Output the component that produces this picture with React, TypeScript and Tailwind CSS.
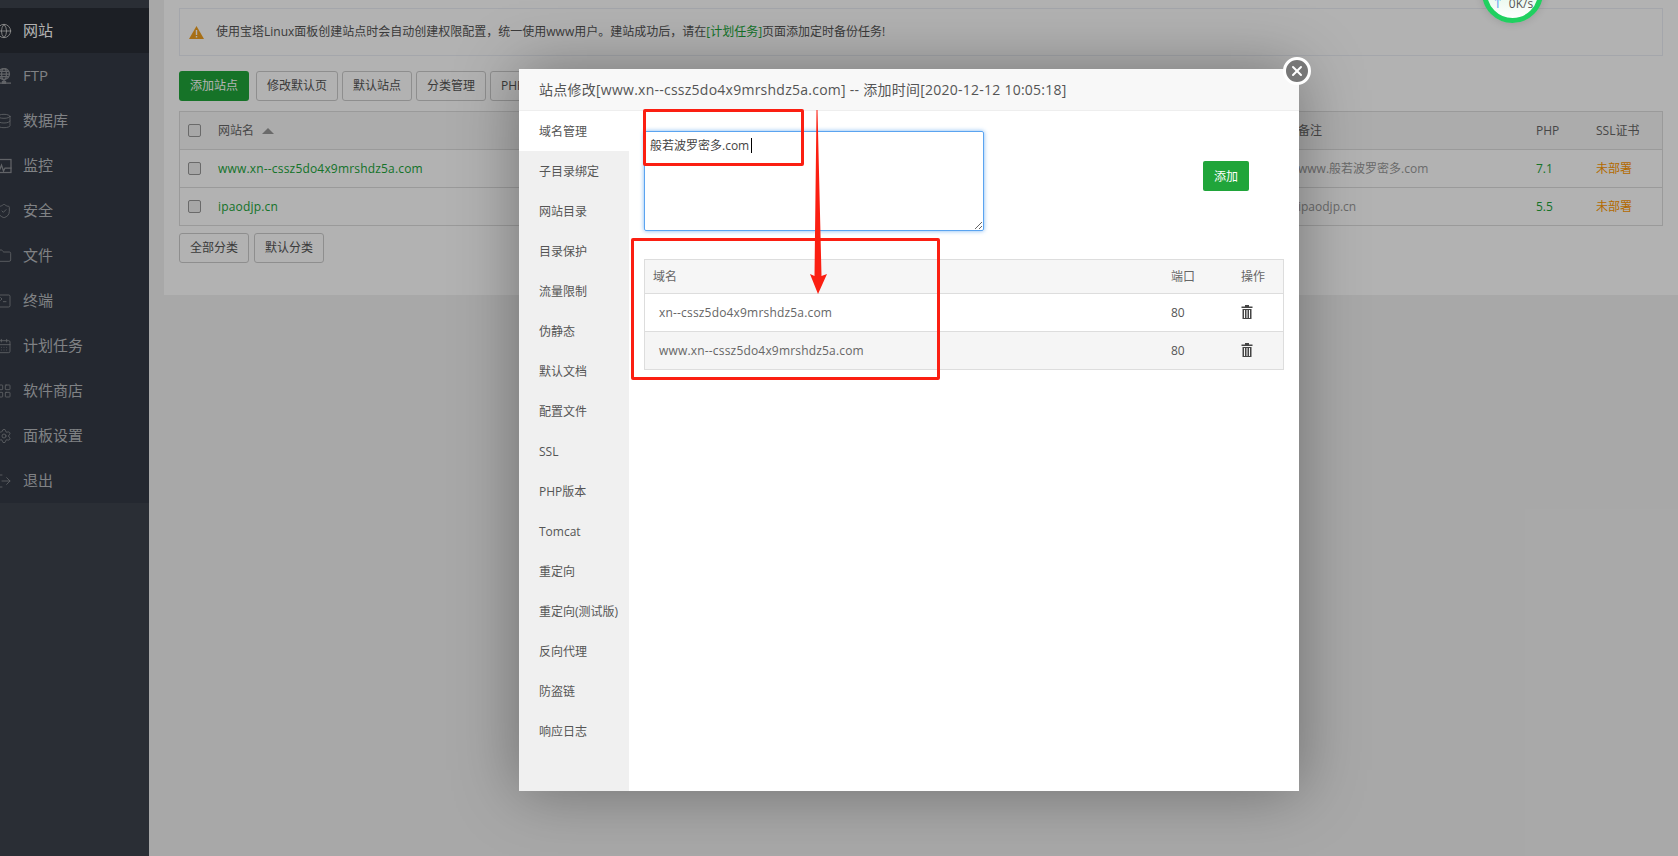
import { CalendarDays, Database, Folder, Globe, LayoutGrid, LogOut, Settings, ShieldCheck, SquareTerminal, X } from "lucide-react";
import type { SVGProps } from "react";

const font = "font-['Open_Sans','Noto_Sans_CJK_SC',sans-serif]";

function FtpIcon(props: SVGProps<SVGSVGElement>) {
  return (
    <svg viewBox="0 0 16 16" fill="none" stroke="currentColor" strokeWidth="1" {...props}>
      <circle cx="8" cy="6" r="5.5" />
      <ellipse cx="8" cy="6" rx="2.4" ry="5.5" />
      <path d="M2.5 6h11M3.3 3.3h9.4M3.3 8.7h9.4M8 11.5v2.5M1 15h14" />
      <rect x="6.5" y="13.5" width="3" height="2" fill="currentColor" />
    </svg>
  );
}

function MonitorIcon(props: SVGProps<SVGSVGElement>) {
  return (
    <svg viewBox="0 0 16 16" fill="none" stroke="currentColor" strokeWidth="1" {...props}>
      <rect x="1" y="1.5" width="14" height="13" />
      <path d="M1 11h3l1.5-4 2 6 1.5-3h6.5" />
    </svg>
  );
}

const navItems = [
  { label: "网站", icon: Globe },
  { label: "FTP", icon: FtpIcon },
  { label: "数据库", icon: Database },
  { label: "监控", icon: MonitorIcon },
  { label: "安全", icon: ShieldCheck },
  { label: "文件", icon: Folder },
  { label: "终端", icon: SquareTerminal },
  { label: "计划任务", icon: CalendarDays },
  { label: "软件商店", icon: LayoutGrid },
  { label: "面板设置", icon: Settings },
  { label: "退出", icon: LogOut },
];

const toolButtons = ["修改默认页", "默认站点", "分类管理"];

const sites = [
  { name: "www.xn--cssz5do4x9mrshdz5a.com", note: "www.般若波罗密多.com", php: "7.1" },
  { name: "ipaodjp.cn", note: "ipaodjp.cn", php: "5.5" },
];

const modalTabs = ["域名管理", "子目录绑定", "网站目录", "目录保护", "流量限制", "伪静态", "默认文档", "配置文件", "SSL", "PHP版本", "Tomcat", "重定向", "重定向(测试版)", "反向代理", "防盗链", "响应日志"];

const domains = ["xn--cssz5do4x9mrshdz5a.com", "www.xn--cssz5do4x9mrshdz5a.com"];

function Checkbox() {
  return <span className="h-[13px] w-[13px] rounded-[2px] border border-[#999] bg-[#f0f0f0]" />;
}

function TrashIcon() {
  return (
    <svg width="12" height="14" viewBox="0 0 12 14" fill="#444">
      <path d="M4 0h4v1.5h3.5V3H.5V1.5H4z" />
      <path d="M1.5 4h9v10h-9zM3 5v8h1V5zm2.5 0v8h1V5zM8 5v8h1V5z" fillRule="evenodd" />
    </svg>
  );
}

function Sidebar() {
  return (
    <aside className="h-full w-[149px] shrink-0 bg-[#3d434d] pt-2">
      <ul className="bg-[#343a45]">
        {navItems.map((item, i) => (
          <li key={item.label} className={`flex h-[45px] items-center gap-[11px] text-[15px] ${i === 0 ? "bg-[#292d35] text-white" : "text-[#b8bbbf]"}`}>
            <item.icon className={`-ml-1 h-4 w-4 shrink-0 ${i === 0 ? "text-[#d0d0d0]" : "text-[#8c8f94]"}`} strokeWidth={1.25} />
            {item.label}
          </li>
        ))}
      </ul>
    </aside>
  );
}

function SiteTable() {
  return (
    <div className="mt-[10px] border border-[#ddd] text-[12px] text-[#666]">
      <div className="grid h-[37px] grid-cols-[38px_1080px_238px_60px_1fr] items-center bg-[#f6f6f6]">
        <span className="flex pl-[8px]"><Checkbox /></span>
        <span className="flex items-center gap-2">网站名<span className="h-0 w-0 border-x-[6px] border-b-[6px] border-x-transparent border-b-[#999]" /></span>
        <span>备注</span>
        <span>PHP</span>
        <span>SSL证书</span>
      </div>
      {sites.map((site) => (
        <div key={site.name} className="grid h-[38px] grid-cols-[38px_1080px_238px_60px_1fr] items-center border-t border-[#ddd]">
          <span className="flex pl-[8px]"><Checkbox /></span>
          <span className="tracking-[0.18px] text-[#20a53a]">{site.name}</span>
          <span className="text-[#999]">{site.note}</span>
          <span className="text-[#20a53a]">{site.php}</span>
          <span className="text-[#ff9900]">未部署</span>
        </div>
      ))}
    </div>
  );
}

function SiteModal() {
  return (
    <div className="absolute left-[519px] top-[69px] h-[722px] w-[780px] bg-white text-[12px] text-[#555] shadow-[0_0_60px_rgba(0,0,0,0.35)]">
      <div className="flex h-[42px] items-center border-b border-[#eee] bg-[#f8f8f8] pl-[20px] text-[14px] tracking-[0.25px] text-[#555]">
        站点修改[www.xn--cssz5do4x9mrshdz5a.com] -- 添加时间[2020-12-12 10:05:18]
      </div>
      <div className="flex h-[680px]">
        <div className="w-[110px] shrink-0 bg-[#f0f0f0]">
          {modalTabs.map((tab, i) => (
            <div key={tab} className={`flex h-10 items-center whitespace-nowrap pl-[20px] pt-[1px] ${i === 0 ? "bg-white" : ""}`}>{tab}</div>
          ))}
        </div>
        <div className="flex-1 pl-[15px] pt-[20px]">
          <div className="flex">
            <div className="relative h-[100px] w-[340px]">
              <textarea
                readOnly
                defaultValue="般若波罗密多.com"
                className="block h-full w-full rounded-[2px] border border-[#5ba4f0] px-[5px] py-[4px] text-[12px] leading-[20px] text-[#444] shadow-[0_0_4px_rgba(91,164,240,0.8)] outline-none"
              />
              <span className="absolute left-[107px] top-[7px] h-[15px] w-px bg-black" />
            </div>
            <button className="ml-[219px] mt-[30px] h-[30px] w-[46px] rounded-[2px] bg-[#20a53a] pt-[1px] text-white">添加</button>
          </div>
          <div className="mt-[28px] w-[640px] border border-[#ddd]">
            <div className="grid h-[33px] grid-cols-[518px_70px_1fr] items-center bg-[#f6f6f6] pl-[8px] text-[#666]">
              <span>域名</span>
              <span>端口</span>
              <span>操作</span>
            </div>
            {domains.map((domain, i) => (
              <div key={domain} className={`grid h-[38px] grid-cols-[512px_69px_1fr] items-center border-t border-[#ddd] pl-[14px] ${i === 1 ? "bg-[#f5f5f5]" : ""}`}>
                <span className="tracking-[0.18px] text-[#666]">{domain}</span>
                <span>80</span>
                <span className="flex pb-[2px] pl-[1px]"><TrashIcon /></span>
              </div>
            ))}
          </div>
        </div>
      </div>
      <button className="absolute left-[764px] top-[-12px] flex h-[28px] w-[28px] items-center justify-center rounded-full border-[3px] border-white bg-[#777] text-white">
        <X className="h-4 w-4" strokeWidth={3} />
      </button>
    </div>
  );
}

export default function App() {
  return (
    <div className={`relative h-[856px] w-[1678px] overflow-hidden bg-[#f1f1f1] ${font}`}>
      <div className="flex h-full">
        <Sidebar />
        <main className="flex-1 pl-[15px]">
          <div className="h-[295px] bg-white px-[15px] pt-[8px]">
            <div className="flex h-[48px] items-center border border-[#ebeef5] pl-[9px] text-[12px] text-[#555]">
              <svg width="15" height="13" viewBox="0 0 15 13" className="mr-[12px] shrink-0">
                <path d="M7.5 0L15 13H0z" fill="#f0a020" />
                <path d="M6.8 4h1.4v5H6.8zM6.8 10h1.4v1.5H6.8z" fill="#fff" />
              </svg>
              使用宝塔Linux面板创建站点时会自动创建权限配置，统一使用www用户。建站成功后，请在<span className="text-[#20a53a]">[计划任务]</span>页面添加定时备份任务!
            </div>
            <div className="mt-[15px] flex h-[30px] gap-[4px] text-[12px] text-[#555]">
              <button className="mr-[3px] w-[70px] rounded-[3px] bg-[#20a53a] text-white">添加站点</button>
              {toolButtons.map((label) => (
                <button key={label} className="rounded-[3px] border border-[#ccc] px-[10px]">{label}</button>
              ))}
              <button className="w-[60px] rounded-[3px] border border-[#ccc] px-[10px] text-left">PHP</button>
            </div>
            <SiteTable />
            <div className="mt-[7px] flex gap-[5px] text-[12px] text-[#555]">
              <button className="h-[30px] w-[70px] rounded-[3px] border border-[#ccc]">全部分类</button>
              <button className="h-[30px] w-[70px] rounded-[3px] border border-[#ccc]">默认分类</button>
            </div>
          </div>
        </main>
      </div>
      <div className="absolute inset-0 bg-black/30" />
      <div className="absolute left-[1482px] top-[-38px] flex h-[61px] w-[61px] items-end justify-center rounded-full border-[5px] border-[#20d060] bg-gradient-to-b from-[#c8f0d4] to-white pb-[8px] text-[12px] leading-none text-[#555] shadow-[0_0_8px_rgba(0,0,0,0.15)]">
        <span className="mr-[5px] text-[#2a8cf0]">↑</span>0K/s
      </div>
      <SiteModal />
      {/* red annotations drawn on top of the screenshot */}
      <div className="absolute left-[643px] top-[109px] h-[57px] w-[161px] rounded-[2px] border-[3px] border-[#fb1f12]" />
      <div className="absolute left-[631px] top-[238px] h-[142px] w-[309px] rounded-[2px] border-[3px] border-[#fb1f12]" />
      <svg className="absolute left-[805px] top-[108px]" width="26" height="188" viewBox="0 0 26 188">
        <polygon points="11.5,2 12.5,2 16.5,168 22,166 13,186 5,166 9.5,168" fill="#fb1f12" />
      </svg>
    </div>
  );
}
